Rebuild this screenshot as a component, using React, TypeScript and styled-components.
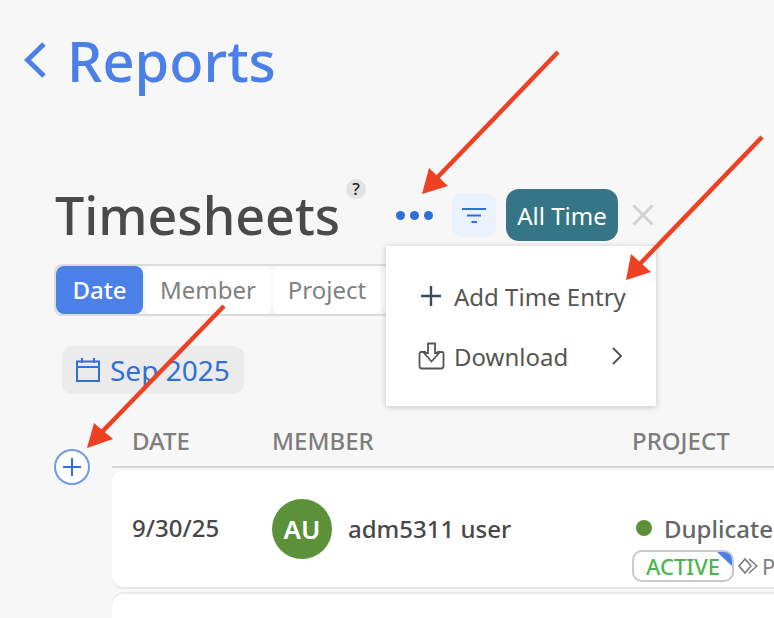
import React from "react";
import styled, { createGlobalStyle } from "styled-components";

const Global = createGlobalStyle`
  html, body { margin: 0; padding: 0; background: #f7f7f7; }
  body { font-family: "Noto Sans", "Open Sans", sans-serif; }
  * { box-sizing: border-box; }
`;

const Page = styled.div`
  position: relative;
  width: 774px;
  height: 618px;
  overflow: hidden;
  background: #f7f7f7;
`;

const BackRow = styled.div`
  display: flex;
  align-items: center;
  gap: 21px;
  height: 60px;
  margin: 30px 0 0 24px;
`;

const BackTitle = styled.span`
  font-size: 56px;
  line-height: 60px;
  font-weight: 500;
  color: #4a80e8;
`;

const TitleRow = styled.div`
  display: flex;
  align-items: flex-start;
  height: 48px;
  margin: 99px 0 0 55px;
`;

const Title = styled.h1`
  margin: 1px 0 0 0;
  font-size: 52px;
  line-height: 50px;
  font-weight: 500;
  color: #4a4a4a;
  width: 291px;
  white-space: nowrap;
`;

const Help = styled.span`
  width: 20px;
  height: 20px;
  margin: -10px 0 0 0;
  border-radius: 50%;
  background: #e2e2e2;
  color: #222;
  font-size: 17px;
  font-weight: 500;
  line-height: 20px;
  text-align: center;
  flex: none;
`;

const Dots = styled.div`
  display: flex;
  gap: 5px;
  margin: 22px 0 0 30px;
  flex: none;
`;

const Dot = styled.span`
  width: 9px;
  height: 9px;
  border-radius: 50%;
  background: #2f6fd8;
`;

const FilterBtn = styled.div`
  display: flex;
  align-items: center;
  justify-content: center;
  width: 44px;
  height: 44px;
  margin: 4px 0 0 19px;
  border-radius: 10px;
  background: #e9f2fd;
  flex: none;
`;

const Pill = styled.div`
  height: 52px;
  width: 112px;
  margin: 0 0 0 10px;
  border-radius: 13px;
  background: #357586;
  color: #fff;
  font-size: 24px;
  line-height: 54px;
  text-align: center;
  flex: none;
`;

const Close = styled.div`
  display: flex;
  margin: 15px 0 0 14px;
  flex: none;
`;

const Tabs = styled.div`
  display: flex;
  width: 420px;
  height: 52px;
  margin: 27px 0 0 54px;
  border: 2px solid #dcdcdc;
  border-radius: 8px;
  gap: 2px;
`;

const Tab = styled.div<{ $active?: boolean; $w: number }>`
  width: ${(p) => p.$w}px;
  height: 48px;
  border-radius: 8px;
  background: ${(p) => (p.$active ? "#4a80e8" : "#fff")};
  color: ${(p) => (p.$active ? "#fff" : "#808080")};
  font-size: 24px;
  font-weight: ${(p) => (p.$active ? 500 : 400)};
  line-height: 48px;
  text-align: center;
  flex: none;
`;

const DateChip = styled.div`
  display: inline-flex;
  align-items: center;
  gap: 10px;
  width: 182px;
  height: 48px;
  margin: 30px 0 0 62px;
  padding-left: 14px;
  border-radius: 10px;
  background: #ebebeb;
  color: #2f6fd8;
  font-size: 28px;
`;

const TableWrap = styled.div`
  display: flex;
  margin: 32px 0 0 54px;
  width: 760px;
`;

const Gutter = styled.div`
  width: 58px;
  padding-top: 23px;
  flex: none;
`;

const AddCircle = styled.div`
  display: flex;
  align-items: center;
  justify-content: center;
  width: 36px;
  height: 36px;
  border: 2px solid #6f9be8;
  border-radius: 50%;
  background: #fff;
`;

const Table = styled.div`
  flex: 1;
  min-width: 0;
`;

const HeadRow = styled.div`
  display: grid;
  grid-template-columns: 140px 360px 1fr;
  height: 42px;
  padding-left: 20px;
  border-bottom: 2px solid #d6d6d6;
  color: #7d7d7d;
  font-size: 24px;
  font-weight: 500;
  line-height: 30px;
`;

const Card = styled.div`
  display: grid;
  grid-template-columns: 140px 360px 1fr;
  height: 116px;
  margin-top: 3px;
  padding-left: 20px;
  border-radius: 12px;
  background: #fff;
  box-shadow: 0 2px 0 #e9e9e9;
  overflow: hidden;
`;

const EmptyCard = styled(Card)`
  margin-top: 7px;
  box-shadow: 0 -2px 0 #e9e9e9;
`;

const DateCell = styled.div`
  padding-top: 42px;
  color: #484848;
  font-size: 24px;
  font-weight: 500;
  line-height: 30px;
`;

const MemberCell = styled.div`
  display: flex;
  align-items: flex-start;
  gap: 16px;
  padding-top: 28px;
`;

const Avatar = styled.div`
  width: 60px;
  height: 60px;
  border-radius: 50%;
  background: #5b9138;
  color: #fff;
  font-size: 26px;
  font-weight: 600;
  line-height: 60px;
  text-align: center;
  flex: none;
`;

const MemberName = styled.div`
  padding-top: 14px;
  color: #484848;
  font-size: 24px;
  font-weight: 500;
  line-height: 32px;
  white-space: nowrap;
`;

const ProjectCell = styled.div`
  padding-top: 42px;
  white-space: nowrap;
  margin-left: 1px;
`;

const ProjectName = styled.div`
  display: flex;
  align-items: center;
  gap: 12px;
  height: 30px;
  color: #666;
  font-size: 24px;
  font-weight: 500;
`;

const StatusDot = styled.span`
  width: 16px;
  height: 16px;
  margin-left: 3px;
  border-radius: 50%;
  background: #5b9138;
  flex: none;
`;

const MetaRow = styled.div`
  display: flex;
  align-items: center;
  gap: 4px;
  margin-top: 7px;
  color: #808080;
  font-size: 22px;
`;

const Badge = styled.div`
  position: relative;
  width: 102px;
  height: 32px;
  margin-left: -1px;
  border: 2px solid #c9c9c9;
  border-radius: 10px;
  color: #4cb551;
  font-size: 22px;
  font-weight: 500;
  line-height: 28px;
  text-align: center;
  overflow: hidden;
  flex: none;
`;

const BadgeCorner = styled.span`
  position: absolute;
  top: 0;
  right: 0;
  width: 0;
  height: 0;
  border-top: 14px solid #4a80e8;
  border-left: 15px solid transparent;
`;

const Menu = styled.div`
  position: absolute;
  left: 386px;
  top: 246px;
  width: 270px;
  height: 160px;
  padding: 20px 33px 0 32px;
  background: #fff;
  box-shadow: 0 1px 6px rgba(0, 0, 0, 0.22);
`;

const MenuItem = styled.div`
  display: flex;
  align-items: center;
  height: 60px;
  color: #555;
  font-size: 24px;
`;

const MenuIcon = styled.span`
  display: flex;
  width: 36px;
  flex: none;
`;

const MenuLabel = styled.span`
  flex: 1;
  white-space: nowrap;
`;

const Arrows = styled.svg`
  position: absolute;
  inset: 0;
  pointer-events: none;
`;

const arrows = [
  { line: "558,52 432,183", head: "422,194 429,168 448,186" },
  { line: "762,137 636,268", head: "626,280 631,254 651,272" },
  { line: "224,306 98,436", head: "87,448 94,423 113,439" },
];

export default function App() {
  return (
    <Page>
      <Global />
      <BackRow>
        <svg width="22" height="36" viewBox="0 0 22 36" fill="none">
          <path d="M20 2 L3.5 18 L20 34" stroke="#4a80e8" strokeWidth="5" />
        </svg>
        <BackTitle>Reports</BackTitle>
      </BackRow>
      <TitleRow>
        <Title>Timesheets</Title>
        <Help>?</Help>
        <Dots>
          <Dot />
          <Dot />
          <Dot />
        </Dots>
        <FilterBtn>
          <svg width="24" height="16" viewBox="0 0 24 16" fill="none" stroke="#2f6fd8" strokeWidth="2.2">
            <path d="M0 2 H24 M5 8.5 H19 M9.5 15 H15" />
          </svg>
        </FilterBtn>
        <Pill>All Time</Pill>
        <Close>
          <svg width="22" height="22" viewBox="0 0 22 22" fill="none" stroke="#d2d2d2" strokeWidth="3">
            <path d="M1.5 1.5 L20.5 20.5 M20.5 1.5 L1.5 20.5" />
          </svg>
        </Close>
      </TitleRow>
      <Tabs>
        <Tab $active $w={87}>Date</Tab>
        <Tab $w={126}>Member</Tab>
        <Tab $w={108}>Project</Tab>
        <Tab $w={80} />
      </Tabs>
      <DateChip>
        <svg width="24" height="24" viewBox="0 0 24 24" fill="none" stroke="#2f6fd8" strokeWidth="2">
          <path d="M1 3.5 H23 V23 H1 Z M1 9 H23 M6 0 V5 M18 0 V5" />
        </svg>
        Sep 2025
      </DateChip>
      <TableWrap>
        <Gutter>
          <AddCircle>
            <svg width="18" height="18" viewBox="0 0 18 18" fill="none" stroke="#2f6fd8" strokeWidth="2">
              <path d="M9 0 V18 M0 9 H18" />
            </svg>
          </AddCircle>
        </Gutter>
        <Table>
          <HeadRow>
            <span>DATE</span>
            <span>MEMBER</span>
            <span>PROJECT</span>
          </HeadRow>
          <Card>
            <DateCell>9/30/25</DateCell>
            <MemberCell>
              <Avatar>AU</Avatar>
              <MemberName>adm5311 user</MemberName>
            </MemberCell>
            <ProjectCell>
              <ProjectName>
                <StatusDot />
                Duplicate Project
              </ProjectName>
              <MetaRow>
                <Badge>
                  ACTIVE
                  <BadgeCorner />
                </Badge>
                <svg width="20" height="18" viewBox="0 0 20 18" fill="none" stroke="#777" strokeWidth="1.5">
                  <path d="M7 2 L1 9 L7 16 L13 9 Z M11 2 L19 9 L11 16" />
                </svg>
                Project
              </MetaRow>
            </ProjectCell>
          </Card>
          <EmptyCard />
        </Table>
      </TableWrap>
      <Menu>
        <MenuItem>
          <MenuIcon>
            <svg width="22" height="22" viewBox="0 0 22 22" fill="none" stroke="#3f4a5e" strokeWidth="2.4" style={{ marginLeft: 2 }}>
              <path d="M11 1 V21 M1 11 H21" />
            </svg>
          </MenuIcon>
          <MenuLabel>Add Time Entry</MenuLabel>
        </MenuItem>
        <MenuItem>
          <MenuIcon>
            <svg width="27" height="28" viewBox="0 0 27 28" fill="none" stroke="#555" strokeWidth="1.8">
              <path d="M8 10 H3 Q1.5 10 1.5 12 V24 Q1.5 26.5 4 26.5 H23 Q25.5 26.5 25.5 24 V12 Q25.5 10 24 10 H19" />
              <path d="M10 1.5 H17 V11 H21 L13.5 19.5 L6 11 H10 Z" />
            </svg>
          </MenuIcon>
          <MenuLabel>Download</MenuLabel>
          <svg width="12" height="20" viewBox="0 0 12 20" fill="none" stroke="#555" strokeWidth="2">
            <path d="M2 2 L10 10 L2 18" />
          </svg>
        </MenuItem>
      </Menu>
      <Arrows width="774" height="618" viewBox="0 0 774 618">
        {arrows.map((a) => (
          <g key={a.head}>
            <polyline points={a.line} fill="none" stroke="#ee4023" strokeWidth="4.5" />
            <polygon points={a.head} fill="#ee4023" />
          </g>
        ))}
      </Arrows>
    </Page>
  );
}
